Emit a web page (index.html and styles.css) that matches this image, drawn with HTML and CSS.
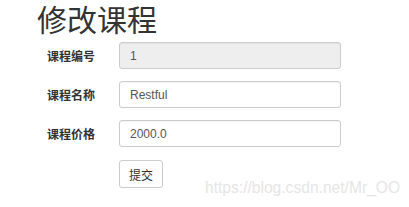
FILE: index.html
```html
<!DOCTYPE html>
<html lang="zh">
<head>
    <meta charset="UTF-8">
    <title>修改课程</title>
    <link rel="stylesheet" href="styles.css">
</head>
<body>
    <div class="container">
        <h2>修改课程</h2>
        <form class="course-form">
            <div class="form-group">
                <label for="cid">课程编号</label>
                <input type="text" id="cid" value="1" disabled>
            </div>
            <div class="form-group">
                <label for="cname">课程名称</label>
                <input type="text" id="cname" value="Restful">
            </div>
            <div class="form-group">
                <label for="cprice">课程价格</label>
                <input type="text" id="cprice" value="2000.0">
            </div>
            <div class="form-actions">
                <button type="button">提交</button>
            </div>
        </form>
    </div>
    <div class="watermark">https://blog.csdn.net/Mr_OO</div>
</body>
</html>
```

FILE: styles.css
```css
body {
    margin: 0;
    font-family: "Liberation Sans", "Noto Sans CJK SC", sans-serif;
    color: #333;
    background: #fff;
}

.container {
    padding-left: 37px;
}

h2 {
    margin: 0;
    font-family: "Noto Sans CJK SC", sans-serif;
    font-size: 30px;
    font-weight: 400;
    line-height: 36px;
    color: #333;
}

.course-form {
    margin-top: 6px;
}

.form-group {
    display: flex;
    align-items: center;
    margin-bottom: 12px;
}

.form-group label {
    width: 58px;
    padding-left: 10px;
    margin-right: 14px;
    font-family: "Noto Sans CJK SC", sans-serif;
    font-size: 12px;
    font-weight: 700;
    color: #333;
}

.form-group input {
    box-sizing: border-box;
    width: 222px;
    height: 27px;
    padding: 0 10px;
    border: 1px solid #ccc;
    border-radius: 3px;
    font-family: "Liberation Sans", sans-serif;
    font-size: 12px;
    color: #555;
    background: #fff;
    box-shadow: inset 0 1px 1px rgba(0, 0, 0, 0.05);
}

.form-group input:disabled {
    background: #eee;
}

.form-actions {
    padding-left: 82px;
    padding-top: 1px;
}

.form-actions button {
    box-sizing: border-box;
    width: 44px;
    height: 28px;
    padding: 0;
    border: 1px solid #ccc;
    border-radius: 3px;
    background: #fff;
    font-family: "Noto Sans CJK SC", sans-serif;
    font-size: 12px;
    color: #333;
}

.watermark {
    position: absolute;
    left: 205px;
    top: 179px;
    font-family: "Liberation Sans", sans-serif;
    font-size: 15.6px;
    color: #e6e6e6;
}
```
